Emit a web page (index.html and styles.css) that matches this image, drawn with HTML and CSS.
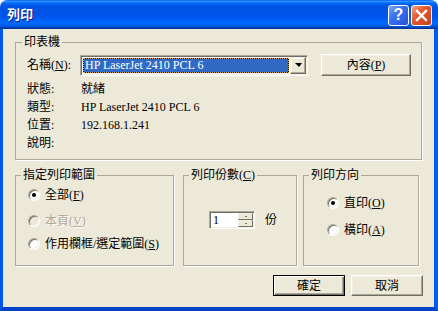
FILE: index.html
```html
<!DOCTYPE html>
<html>
<head>
    <meta charset="utf-8"/>
    <title>列印</title>
    <link rel="stylesheet" href="styles.css">
</head>
<body>
    <div class="window">
        <div class="titlebar">
            <span class="title">列印</span>
            <div class="caption-buttons">
                <span class="cap-btn help">?</span>
                <span class="cap-btn close">
                    <svg width="13" height="13" viewBox="0 0 13 13">
                        <path d="M2 2 L11 11 M11 2 L2 11" stroke="#fff" stroke-width="2.4" stroke-linecap="square"/>
                    </svg>
                </span>
            </div>
        </div>
        <div class="client">
            <fieldset class="group printer">
                <legend>印表機</legend>
                <div class="printer-body">
                    <span class="row-label name-label">名稱(<u>N</u>):</span>
                    <div class="name-row">
                        <div class="combo">
                            <span class="selection">HP LaserJet 2410 PCL 6</span>
                            <span class="drop-btn"><span class="arrow-down"></span></span>
                        </div>
                        <button class="btn props">內容(<u>P</u>)</button>
                    </div>
                    <span class="row-label">狀態:</span><span class="value">就緒</span>
                    <span class="row-label">類型:</span><span class="value">HP LaserJet 2410 PCL 6</span>
                    <span class="row-label">位置:</span><span class="value">192.168.1.241</span>
                    <span class="row-label">說明:</span><span class="value"></span>
                </div>
            </fieldset>

            <div class="options">
                <fieldset class="group range">
                    <legend>指定列印範圍</legend>
                    <div class="range-body">
                        <div class="radio-row first"><span class="radio checked"></span><span>全部(<u>F</u>)</span></div>
                        <div class="radio-row second disabled"><span class="radio"></span><span>本頁(<u>V</u>)</span></div>
                        <div class="radio-row third"><span class="radio"></span><span>作用欄框/選定範圍(<u>S</u>)</span></div>
                    </div>
                </fieldset>
                <fieldset class="group copies">
                    <legend>列印份數(<u>C</u>)</legend>
                    <div class="copies-body">
                        <div class="spin">
                            <span class="spin-value">1</span>
                            <span class="spin-buttons">
                                <span class="spin-btn"><span class="arrow-up-small"></span></span>
                                <span class="spin-btn"><span class="arrow-down-small"></span></span>
                            </span>
                        </div>
                        <span class="unit">份</span>
                    </div>
                </fieldset>
                <fieldset class="group orient">
                    <legend>列印方向</legend>
                    <div class="orient-body">
                        <div class="radio-row first"><span class="radio checked"></span><span>直印(<u>O</u>)</span></div>
                        <div class="radio-row second"><span class="radio"></span><span>橫印(<u>A</u>)</span></div>
                    </div>
                </fieldset>
            </div>

            <div class="actions">
                <button class="btn default">確定</button>
                <button class="btn">取消</button>
            </div>
        </div>
    </div>
</body>
</html>
```

FILE: styles.css
```css
body {
    margin: 0;
    background: #fff;
    font: 12px/16px "Liberation Serif", "Noto Sans CJK TC", serif;
    color: #000;
}
.window {
    width: 438px;
    height: 311px;
    display: flex;
    flex-direction: column;
}
.titlebar {
    height: 29px;
    flex: none;
    display: flex;
    align-items: center;
    justify-content: space-between;
    padding: 0 6px 0 7px;
    border-radius: 7px 7px 0 0;
    background: linear-gradient(to bottom, #0058ee 0%, #3593ff 4%, #288eff 6%, #127dff 8%, #036ffc 10%, #0262ee 14%, #0057e5 20%, #0054e3 24%, #0055eb 56%, #005bf5 66%, #026afe 76%, #0062ef 86%, #0052d6 92%, #0040ab 96%, #003092 100%);
}
.title {
    font: bold 13px/16px "Liberation Sans", "Noto Sans CJK TC", sans-serif;
    color: #fff;
    text-shadow: 1px 1px 0 #0a1883;
}
.caption-buttons {
    display: flex;
    gap: 2px;
    padding-top: 1px;
}
.cap-btn {
    width: 21px;
    height: 21px;
    box-sizing: border-box;
    border: 1px solid #fff;
    border-radius: 3px;
    display: flex;
    align-items: center;
    justify-content: center;
    color: #fff;
}
.help {
    background: linear-gradient(135deg, #7aa8fa 0%, #3a70ee 40%, #2354dc 100%);
    font: bold 16px/1 "Liberation Sans", sans-serif;
}
.close {
    background: linear-gradient(135deg, #f2a58a 0%, #e2582f 40%, #c7401b 100%);
}
.client {
    flex: 1;
    background: #ece9d8;
    border-style: solid;
    border-color: #0058ee;
    border-width: 0 4px 4px 3px;
    border-bottom-color: #0042c8;
    padding: 5px 12px 0 12px;
    display: flex;
    flex-direction: column;
}
.group {
    margin: 0;
    padding: 0;
    min-width: 0;
    box-sizing: border-box;
    border: 1px solid #aca899;
    box-shadow: 1px 1px 0 #fff;
}
.group legend {
    margin-left: 5px;
    padding: 0 2px;
    line-height: 16px;
}
.printer legend {
    margin-left: 6px;
}
.printer-body {
    padding: 4px 9px 7px 11px;
    display: grid;
    grid-template-columns: 53px 1fr;
}
.row-label,
.value {
    line-height: 18px;
}
.value {
    padding-left: 1px;
}
.name-label {
    line-height: 22px;
    margin-bottom: 4px;
}
.name-row {
    display: flex;
    align-items: center;
    height: 22px;
    margin-bottom: 4px;
}
.combo {
    width: 228px;
    height: 21px;
    box-sizing: border-box;
    display: flex;
    background: #fff;
    border: 1px solid;
    border-color: #aca899 #fff #fff #aca899;
    box-shadow: inset 1px 1px 0 #716f64, inset -1px -1px 0 #f1efe2;
    padding: 1px 1px 1px 1px;
}
.selection {
    flex: 1;
    margin: 1px 1px 1px 1px;
    border: 1px dotted #e0a83c;
    background: linear-gradient(#316ac5, #316ac5) padding-box, #000;
    color: #fff;
    line-height: 13px;
    padding-left: 1px;
    font-size: 12px;
}
.drop-btn {
    width: 16px;
    flex: none;
    box-sizing: border-box;
    background: #ece9d8;
    border: 1px solid;
    border-color: #f1efe2 #716f64 #716f64 #f1efe2;
    box-shadow: inset -1px -1px 0 #aca899, inset 1px 1px 0 #fff;
    display: flex;
    align-items: center;
    justify-content: center;
}
.arrow-down {
    width: 0;
    height: 0;
    border-left: 4px solid transparent;
    border-right: 3px solid transparent;
    border-top: 4px solid #000;
}
.btn {
    font: 12px/16px "Liberation Serif", "Noto Sans CJK TC", serif;
    color: #000;
    background: #ece9d8;
    box-sizing: border-box;
    border: 1px solid;
    border-color: #fff #716f64 #716f64 #fff;
    box-shadow: inset -1px -1px 0 #aca899, inset 1px 1px 0 #f1efe2;
    padding: 0;
    width: 72px;
    height: 21px;
}
.props {
    width: 90px;
    height: 22px;
    margin-left: 13px;
}
.btn.default {
    border-color: #000;
    box-shadow: inset 1px 1px 0 #fff, inset -1px -1px 0 #716f64, inset -2px -2px 0 #aca899;
}
.options {
    display: flex;
    height: 99px;
    margin-top: 7px;
}
.range {
    width: 159px;
}
.copies {
    width: 114px;
    margin-left: 9px;
}
.orient {
    width: 116px;
    margin-left: 6px;
}
.range-body {
    padding: 4px 0 0 12px;
}
.range .second {
    margin-top: 10px;
}
.range .third {
    margin-top: 7px;
}
.radio-row {
    display: flex;
    align-items: center;
    gap: 5px;
    height: 16px;
    white-space: nowrap;
}
.radio-row.disabled {
    color: #aca899;
    text-shadow: 1px 1px 0 #fff;
}
.radio {
    width: 12px;
    height: 12px;
    flex: none;
    box-sizing: border-box;
    border-radius: 50%;
    border: 1px solid;
    border-color: #aca899 #fff #fff #aca899;
    box-shadow: inset 1px 1px 0 #716f64, inset -1px -1px 0 #f1efe2;
    background: #fff;
    display: flex;
    align-items: center;
    justify-content: center;
}
.disabled .radio {
    background: #ece9d8;
}
.radio.checked::after {
    content: "";
    width: 4px;
    height: 4px;
    border-radius: 50%;
    background: #000;
}
.copies-body {
    padding: 28px 0 0 25px;
    display: flex;
    align-items: center;
}
.spin {
    width: 46px;
    height: 18px;
    box-sizing: border-box;
    display: flex;
    background: #fff;
    border: 1px solid;
    border-color: #aca899 #fff #fff #aca899;
    box-shadow: inset 1px 1px 0 #716f64, inset -1px -1px 0 #f1efe2;
    padding: 1px 1px 1px 2px;
}
.spin-value {
    flex: 1;
    line-height: 14px;
    padding-left: 1px;
}
.spin-buttons {
    width: 15px;
    display: flex;
    flex-direction: column;
}
.spin-btn {
    flex: 1;
    box-sizing: border-box;
    background: #ece9d8;
    border: 1px solid;
    border-color: #f1efe2 #716f64 #716f64 #f1efe2;
    display: flex;
    align-items: center;
    justify-content: center;
}
.arrow-up-small,
.arrow-down-small {
    width: 0;
    height: 0;
    border-left: 1px solid transparent;
    border-right: 1px solid transparent;
}
.arrow-up-small {
    border-bottom: 1px solid #000;
}
.arrow-down-small {
    border-top: 1px solid #000;
}
.unit {
    margin-left: 10px;
}
.orient-body {
    padding: 12px 0 0 23px;
}
.orient .second {
    margin-top: 11px;
}
.actions {
    display: flex;
    justify-content: flex-end;
    gap: 6px;
    margin-top: 9px;
    margin-right: -1px;
}
```
